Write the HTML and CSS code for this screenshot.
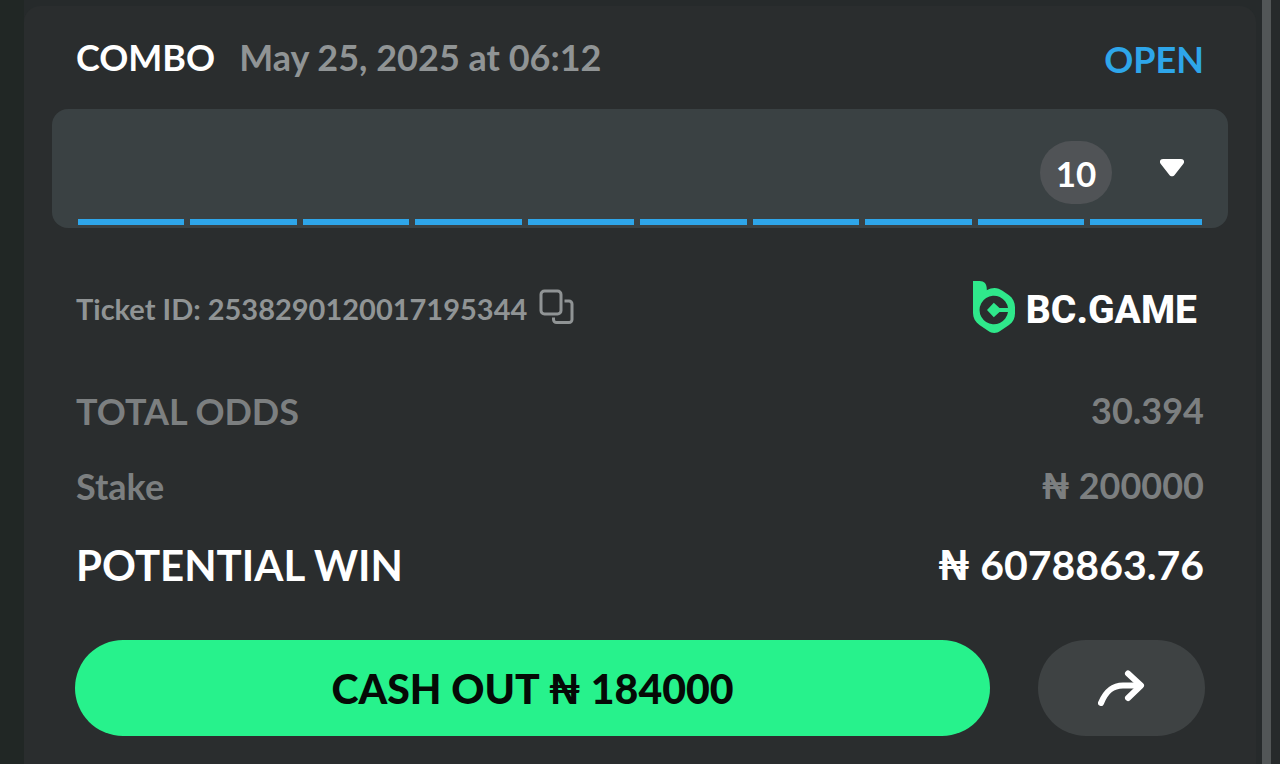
FILE: index.html
```html
<!DOCTYPE html>
<html lang="en">
<head>
<meta charset="utf-8">
<meta name="viewport" content="width=device-width, initial-scale=1">
<title>Bet ticket</title>
<link rel="stylesheet" href="styles.css">
</head>
<body>
<div class="screen">
  <main class="ticket">
    <header class="ticket-head">
      <h1 class="kind">COMBO</h1>
      <time class="date" datetime="2025-05-25T06:12">May 25, 2025 at 06:12</time>
      <span class="status">OPEN</span>
    </header>

    <button class="legs" type="button" aria-expanded="false" aria-label="Show 10 selections">
      <span class="legs-info">
        <span class="count">10</span>
        <svg class="caret" viewBox="0 0 24 18" aria-hidden="true"><path d="M3 0h18c3 0 4 3 2.200 5L14.800 15.800c-1.500 2-4.100 2-5.600 0L.8 5C-1 3 0 0 3 0z" fill="#fff"/></svg>
      </span>
      <span class="bars"><i></i><i></i><i></i><i></i><i></i><i></i><i></i><i></i><i></i><i></i></span>
    </button>

    <div class="id-row">
      <span class="ticket-id">Ticket ID: 2538290120017195344</span>
      <button class="copy" type="button" aria-label="Copy ticket ID">
        <svg viewBox="0 0 36 36" aria-hidden="true"><g fill="none" stroke="#909495" stroke-width="3"><rect x="2" y="2" width="20" height="23" rx="3.500"/><path d="M25.500 12h4.500a3 3 0 0 1 3 3v15.500a3 3 0 0 1-3 3H17.500a3 3 0 0 1-3-3V28.500"/></g></svg>
      </button>
      <div class="brand">
        <svg class="brand-mark" viewBox="0 0 42 52" aria-hidden="true">
          <path fill="#2fe88b" fill-rule="evenodd" d="M0 0h6.500C11.500 0 14 3 13.800 9.200 16.500 7.700 19 7 21.500 7c3 0 5.500 1.200 8 2.700l6.500 4.500c3.800 2.800 6 7 6 12v6c0 5-2 9-6 11.800l-8.500 5.700c-4 3-8.500 3-12.500 0l-8.500-5.700C2.300 41 0 37 0 32zM35 27A14.300 14.300 0 1 0 35 31L26.500 31L20.800 36.200 14 29l6.800-7.200 5.700 5.200z"/>
        </svg>
        <span class="brand-name">BC.GAME</span>
      </div>
    </div>

    <dl class="totals">
      <div class="line"><dt>TOTAL ODDS</dt><dd>30.394</dd></div>
      <div class="line"><dt>Stake</dt><dd><span class="naira">₦</span> 200000</dd></div>
      <div class="line win"><dt>POTENTIAL WIN</dt><dd><span class="naira">₦</span> 6078863.76</dd></div>
    </dl>

    <div class="actions">
      <button class="cash-out" type="button">CASH OUT ₦ 184000</button>
      <button class="share" type="button" aria-label="Share ticket">
        <svg viewBox="0 0 48 38" aria-hidden="true"><g fill="none" stroke="#fff" stroke-width="6" stroke-linecap="round" stroke-linejoin="round"><path d="M3 34C8 22 14.500 16.500 25 16.500h17"/><path d="M30 4.500 43 16.500 30 29"/></g></svg>
      </button>
    </div>
  </main>
  <div class="scroll-track"></div>
</div>
</body>
</html>
```
FILE: styles.css
```css
* {
  box-sizing: border-box;
}

body {
  margin: 0;
  background: #212526;
  color: #fff;
  font-family: Lato, "Noto Sans", sans-serif;
}

button {
  border: 0;
  padding: 0;
  color: inherit;
  font: inherit;
  cursor: pointer;
}

svg {
  display: block;
}

.screen {
  display: flex;
  min-height: 100vh;
  padding: 6px 9px 0 24px;
  background: linear-gradient(to right, #212725 24px, #262a2b 24px);
}

.ticket {
  flex: 1;
  padding: 26px 28px 28px;
  border-radius: 16px 16px 0 0;
  background: #2a2d2e;
}

.scroll-track {
  width: 9px;
  margin: -6px 0 0 6px;
  background: #525657;
}

.ticket-head {
  display: flex;
  align-items: center;
  gap: 24px;
  height: 50px;
  padding: 0 24px;
  font-size: 36px;
  font-weight: 700;
  line-height: 48px;
}

.kind {
  margin: 0;
  font-size: 36px;
}

.date {
  color: #909495;
}

.status {
  margin-left: auto;
  padding-top: 4px;
  color: #2ea6ea;
}

.legs {
  display: flex;
  flex-direction: column;
  justify-content: space-between;
  width: 100%;
  height: 119px;
  margin-top: 27px;
  padding: 32px 26px 3px;
  border-radius: 16px;
  background: #3a4143;
}

.legs-info {
  display: flex;
  justify-content: flex-end;
  gap: 48px;
  padding-right: 18px;
}

.count {
  width: 72px;
  height: 63px;
  border-radius: 32px;
  background: #505356;
  font-size: 35px;
  font-weight: 700;
  line-height: 64px;
  text-align: center;
}

.caret {
  width: 24px;
  height: 18px;
  margin-top: 18px;
}

.bars {
  display: flex;
  gap: 6px;
}

.bars i {
  flex: 1;
  height: 6px;
  background: #2ea6ea;
}

.bars i:last-child {
  flex: 0 0 112px;
}

.id-row {
  display: flex;
  align-items: center;
  height: 56px;
  margin-top: 51px;
  padding: 0 31px 0 24px;
}

.ticket-id {
  padding-top: 2px;
  color: #909495;
  font-size: 29px;
  font-weight: 700;
}

.copy {
  width: 36px;
  height: 36px;
  margin-left: 12px;
  background: none;
}

.brand {
  display: flex;
  align-items: center;
  gap: 11px;
  margin-left: auto;
}

.brand-mark {
  width: 42px;
  height: 52px;
}

.brand-name {
  padding-top: 5px;
  font-family: Roboto, sans-serif;
  font-size: 39px;
  font-weight: 800;
  line-height: 48px;
}

.totals {
  margin: 0;
  padding: 39px 24px 0;
}

.line {
  display: flex;
  justify-content: space-between;
  height: 75px;
  color: #7c7f80;
  font-size: 36px;
  font-weight: 700;
  line-height: 75px;
}

.line dd {
  margin: 0;
  line-height: 72px;
}

.naira {
  font-weight: 900;
}

.win {
  height: 82px;
  color: #fff;
  font-size: 41px;
  line-height: 82px;
}

.win dt {
  font-size: 42px;
}

.win dd {
  line-height: 82px;
}

.actions {
  display: flex;
  gap: 48px;
  margin-top: 34px;
  padding: 0 23px;
}

.cash-out {
  flex: 1;
  height: 96px;
  border-radius: 48px;
  background: #27f28c;
  color: #050a06;
  font-size: 41px;
  font-weight: 900;
}

.share {
  display: grid;
  place-items: center;
  width: 167px;
  height: 96px;
  border-radius: 48px;
  background: #3e4243;
}

.share svg {
  width: 48px;
  height: 38px;
}
```
